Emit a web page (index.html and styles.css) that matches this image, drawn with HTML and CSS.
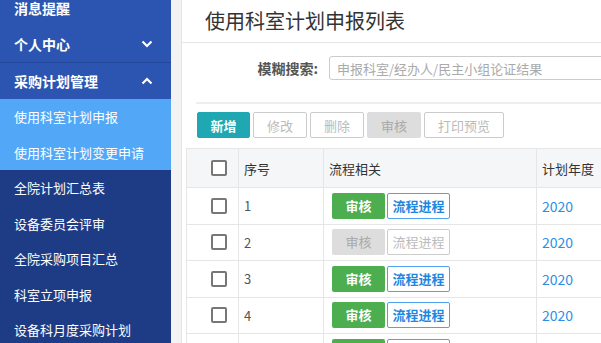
FILE: index.html
```html
<!DOCTYPE html>
<html>

<head>
    <title>使用科室计划申报列表</title>
    <meta charset='UTF-8'>
    <meta name='viewport' content='width=device-width, initial-scale=1.0'>
    <link rel="stylesheet" href="styles.css">
</head>

<body>
    <div class='sidebar'>
        <ul class='menu'>
            <li class='menu-top'>消息提醒</li>
            <li class='menu-top'>个人中心
                <svg class='chev' width='12' height='8' viewBox='0 0 12 8'><path d='M1.5 1.5 L6 6 L10.5 1.5' fill='none' stroke='#fff' stroke-width='2.2'/></svg>
            </li>
            <li class='menu-top open'>采购计划管理
                <svg class='chev' width='12' height='8' viewBox='0 0 12 8'><path d='M1.5 6.5 L6 2 L10.5 6.5' fill='none' stroke='#fff' stroke-width='2.2'/></svg>
            </li>
            <li class='menu-sub active'>使用科室计划申报</li>
            <li class='menu-sub active'>使用科室计划变更申请</li>
            <li class='menu-sub'>全院计划汇总表</li>
            <li class='menu-sub'>设备委员会评审</li>
            <li class='menu-sub'>全院采购项目汇总</li>
            <li class='menu-sub'>科室立项申报</li>
            <li class='menu-sub'>设备科月度采购计划</li>
        </ul>
    </div>
    <div class='strip'></div>
    <div class='main'>
        <div class='page-head'>使用科室计划申报列表</div>
        <div class='search'>
            <label class='search-label'>模糊搜索:</label>
            <input class='search-input' type='text' placeholder='申报科室/经办人/民主小组论证结果'>
        </div>
        <div class='sep'></div>
        <div class='toolbar'>
            <button class='btn btn-primary'>新增</button>
            <button class='btn'>修改</button>
            <button class='btn'>删除</button>
            <button class='btn btn-gray'>审核</button>
            <button class='btn btn-wide'>打印预览</button>
        </div>
        <table class='grid'>
            <tr>
                <th class='c-check'><span class='check'></span></th>
                <th class='c-no'>序号</th>
                <th class='c-flow'>流程相关</th>
                <th class='c-year'>计划年度</th>
            </tr>
            <tr>
                <td class='c-check'><span class='check'></span></td>
                <td>1</td>
                <td><span class='b-audit'>审核</span><span class='b-flow'>流程进程</span></td>
                <td class='year'>2020</td>
            </tr>
            <tr>
                <td class='c-check'><span class='check'></span></td>
                <td>2</td>
                <td><span class='b-audit off'>审核</span><span class='b-flow off'>流程进程</span></td>
                <td class='year'>2020</td>
            </tr>
            <tr>
                <td class='c-check'><span class='check'></span></td>
                <td>3</td>
                <td><span class='b-audit'>审核</span><span class='b-flow'>流程进程</span></td>
                <td class='year'>2020</td>
            </tr>
            <tr>
                <td class='c-check'><span class='check'></span></td>
                <td>4</td>
                <td><span class='b-audit'>审核</span><span class='b-flow'>流程进程</span></td>
                <td class='year'>2020</td>
            </tr>
            <tr>
                <td class='c-check'><span class='check'></span></td>
                <td>5</td>
                <td><span class='b-audit'>审核</span><span class='b-flow'>流程进程</span></td>
                <td class='year'>2020</td>
            </tr>
        </table>
    </div>
</body>

</html>
```

FILE: styles.css
```css
body {
    margin: 0;
    display: flex;
    height: 343px;
    overflow: hidden;
    font-family: "Noto Sans CJK SC", "Noto Sans", sans-serif;
    font-size: 13px;
    color: #333;
}

.sidebar {
    width: 171px;
    flex-shrink: 0;
    background-color: #1e3c85;
    overflow: hidden;
}

.menu {
    list-style: none;
    margin: -10px 0 0 0;
    padding: 0;
}

.menu li {
    display: flex;
    align-items: center;
    padding-left: 14px;
    color: #fff;
    white-space: nowrap;
}

.menu-top {
    height: 36px;
    background-color: #2b55b0;
    font-size: 14px;
    font-weight: bold;
}

.menu-top.open {
    border-top: 1px solid #22479c;
}

.chev {
    margin-left: auto;
    margin-right: 18px;
}

.menu-sub {
    height: 35.5px;
    font-size: 13px;
}

.menu-sub.active {
    background-color: #52a8f7;
}

.strip {
    width: 10px;
    flex-shrink: 0;
    background-color: #f3f3f3;
    border-right: 1px solid #e4e4e4;
}

.main {
    flex: 1;
    min-width: 0;
    overflow: hidden;
}

.page-head {
    height: 42px;
    line-height: 42px;
    padding-left: 23px;
    font-size: 20px;
    color: #333;
    border-bottom: 1px solid #e6e6e6;
}

.search {
    display: flex;
    align-items: center;
    margin-top: 13px;
    height: 24px;
}

.search-label {
    width: 136px;
    flex-shrink: 0;
    text-align: right;
    font-size: 14px;
    font-weight: bold;
    color: #555;
}

.search-input {
    margin-left: 11px;
    width: 300px;
    height: 24px;
    box-sizing: border-box;
    border: 1px solid #ccc;
    border-radius: 3px;
    padding: 0 7px;
    font-family: inherit;
    font-size: 13px;
    flex-shrink: 0;
}

.search-input::placeholder {
    color: #aaa;
}

.sep {
    margin: 22px 0 0 14px;
    height: 2px;
    background-color: #eee;
}

.toolbar {
    display: flex;
    gap: 3px;
    margin-top: 8px;
    padding-left: 15px;
}

.btn {
    width: 54px;
    height: 26px;
    box-sizing: border-box;
    border: 1px solid #ccc;
    border-radius: 2px;
    background-color: #fff;
    color: #bbb;
    font-family: inherit;
    font-size: 13px;
    padding: 0;
}

.btn-primary {
    width: 53px;
    background-color: #1fa8b2;
    border-color: #1fa8b2;
    color: #fff;
    font-weight: bold;
}

.btn-gray {
    background-color: #ddd;
    border-color: #ddd;
    color: #aaa;
}

.btn-wide {
    width: 80px;
}

.grid {
    margin: 10px 0 0 4px;
    border-collapse: collapse;
    border: 1px solid #ddd;
    width: 480px;
    table-layout: fixed;
}

.grid th,
.grid td {
    height: 36.5px;
    box-sizing: border-box;
    border: 1px solid #e6e6e6;
    text-align: left;
    padding: 0 0 0 5px;
    white-space: nowrap;
}

.grid th {
    height: 39px;
    background-color: #f5f6f8;
    font-weight: normal;
    color: #333;
}

.grid td {
    color: #555;
}

.c-check {
    width: 52px;
}

.grid .c-check {
    padding-left: 24px;
}

.c-no {
    width: 85px;
}

.c-flow {
    width: 213px;
}

.check {
    display: block;
    width: 16px;
    height: 16px;
    box-sizing: border-box;
    border: 2px solid #777;
    border-radius: 2px;
    background-color: #fff;
}

.b-audit {
    display: inline-block;
    width: 53px;
    height: 26px;
    line-height: 26px;
    text-align: center;
    background-color: #4cae4f;
    border-radius: 2px;
    color: #fff;
    font-weight: bold;
    vertical-align: middle;
    margin-left: 3px;
}

.b-audit.off {
    background-color: #ddd;
    color: #aaa;
    font-weight: normal;
}

.b-flow {
    display: inline-block;
    width: 63px;
    height: 26px;
    line-height: 24px;
    box-sizing: border-box;
    text-align: center;
    border: 1px solid #4da3f0;
    border-radius: 2px;
    color: #1f87e0;
    font-weight: bold;
    vertical-align: middle;
    margin-left: 2px;
}

.b-flow.off {
    border-color: #ccc;
    color: #bbb;
    font-weight: normal;
}

.grid td.year {
    color: #2d8fe6;
    font-size: 14px;
}
```
